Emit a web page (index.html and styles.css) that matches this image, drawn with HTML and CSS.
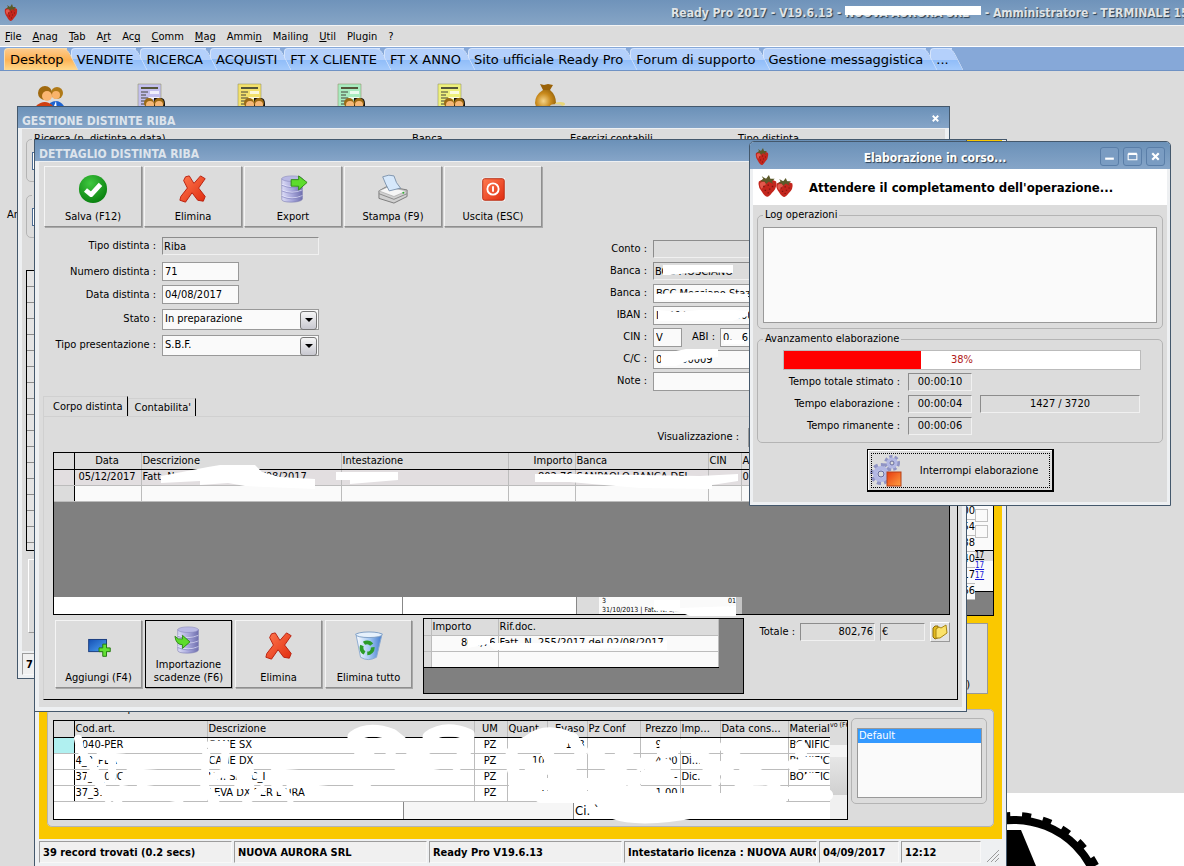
FILE: index.html
```html
<!DOCTYPE html>
<html lang="it">
<head>
  <meta charset="UTF-8">
  <meta name="viewport" content="width=device-width, initial-scale=1.0">
  <title>Ready Pro 2017</title>
  <link rel="stylesheet" href="styles.css">
</head>

<body>

<!-- Shared icons -->
<svg class="defs" aria-hidden="true">
  <defs>
    <linearGradient id="gDb" x1="0" x2="1"><stop offset="0" stop-color="#dcdcf6"/><stop offset=".5" stop-color="#a9a9dc"/><stop offset="1" stop-color="#6f6fae"/></linearGradient>
    <radialGradient id="gGreen" cx=".4" cy=".3" r=".8"><stop offset="0" stop-color="#3fc83f"/><stop offset="1" stop-color="#04780a"/></radialGradient>
    <linearGradient id="gRed" x1="0" x2="1" y1="0" y2="1"><stop offset="0" stop-color="#ff7a50"/><stop offset="1" stop-color="#e02d10"/></linearGradient>
    <linearGradient id="gOrange" x1="0" x2="1" y1="0" y2="1"><stop offset="0" stop-color="#e83a10"/><stop offset="1" stop-color="#ffa040"/></linearGradient>
    <linearGradient id="gBlue" x1="0" x2="1" y1="0" y2="1"><stop offset="0" stop-color="#1550b4"/><stop offset="1" stop-color="#4fa4f4"/></linearGradient>
    <linearGradient id="gBin" x1="0" x2="1"><stop offset="0" stop-color="#ffffff"/><stop offset=".5" stop-color="#a8cbf4"/><stop offset="1" stop-color="#3f78cc"/></linearGradient>
    <radialGradient id="gGold" cx=".4" cy=".5" r=".7"><stop offset="0" stop-color="#f4d48a"/><stop offset=".5" stop-color="#c98a1c"/><stop offset="1" stop-color="#8a5a08"/></radialGradient>
  </defs>
  <symbol id="berry" viewBox="0 0 16 18" preserveAspectRatio="none">
    <path d="M2 5 Q8 1 14 5 Q15 10 11 14 Q9 17 8 17 Q6 17 4 13 Q1 9 2 5Z" fill="#c3261d"/>
    <path d="M3 6 Q6 4 7 7 Q5 9 4 11 Q2 8 3 6Z" fill="#e2584c"/>
    <path d="M3 5 L5 3 L4 1 L7 3 L9 0 L10 3 L13 3 L11 5 L12 7 L9 5 L7 7 L6 5Z" fill="#5b5a2a"/>
    <path d="M5 9h1M8 8h1M11 9h1M6 12h1M9 11h1M8 14h1" stroke="#7c1510"/>
  </symbol>
  <symbol id="cross" viewBox="0 0 32 32">
    <path d="M8 3 L12 2 L17 10 L24 2 L29 5 L22 15 L29 24 L27 29 L21 28 L15 20 L8 30 L2 28 L3 24 L10 15 L6 7Z" fill="url(#gRed)" stroke="#b81e0c" stroke-linejoin="round"/>
  </symbol>
  <symbol id="db" viewBox="0 0 32 32">
    <path d="M4 5 V27 Q4 30 14 30 T26 27 V5Z" fill="url(#gDb)" stroke="#7676ae" stroke-width=".6"/>
    <ellipse cx="15" cy="5" rx="11" ry="3" fill="#b9b9e4" stroke="#8585bb" stroke-width=".6"/>
    <path d="M4 11 Q15 16 26 11 M4 17 Q15 22 26 17 M4 23 Q15 28 26 23" fill="none" stroke="#ededff" stroke-width=".7"/>
    <path d="M4 12 Q15 17 26 12 M4 18 Q15 23 26 18 M4 24 Q15 29 26 24" fill="none" stroke="#8585bf" stroke-width=".7"/>
  </symbol>
  <symbol id="doc" viewBox="0 0 32 32">
    <path d="M4 1H27V30H4Z" fill="currentColor" stroke="#8a8a5a" stroke-opacity=".5"/>
    <path d="M7 4H24V6H7Z" fill="#55553a"/>
    <path d="M7 9h7M7 12h5M7 15h7M7 18h4M7 21h4" stroke="#44443a"/>
    <path d="M16 8H25V11H16ZM15 14H25V16H15Z" fill="#fff" fill-opacity=".75"/>
    <path d="M20 15 H27 Q31 15 31 21 V26 H20Z" fill="#111"/>
    <circle cx="15" cy="20" r="5" fill="#9a6a14"/><circle cx="25" cy="20" r="5" fill="#9a6a14"/>
    <circle cx="16" cy="22" r="4" fill="#f7b877"/><circle cx="25" cy="22" r="4" fill="#f7b877"/>
  </symbol>
</svg>

<header class="app-title">
  <svg class="berry"><use href="#berry"/></svg>
  <h1>Ready Pro 2017 - V19.6.13 - <span class="struck">NUOVA AURORA SRL</span> - Amministratore - TERMINALE 15</h1>
</header>

<nav class="menubar">
  <a href="#"><u>F</u>ile</a>
  <a href="#"><u>A</u>nag</a>
  <a href="#"><u>T</u>ab</a>
  <a href="#">A<u>r</u>t</a>
  <a href="#">Ac<u>q</u></a>
  <a href="#"><u>C</u>omm</a>
  <a href="#"><u>M</u>ag</a>
  <a href="#">Ammi<u>n</u></a>
  <a href="#">Mailin<u>g</u></a>
  <a href="#"><u>U</u>til</a>
  <a href="#">Plugin</a>
  <a href="#">?</a>
</nav>

<nav class="tabbar">
  <button class="tab active"><span>Desktop</span></button>
  <button class="tab"><span>VENDITE</span></button>
  <button class="tab"><span>RICERCA</span></button>
  <button class="tab"><span>ACQUISTI</span></button>
  <button class="tab"><span>FT X CLIENTE</span></button>
  <button class="tab"><span>FT X ANNO</span></button>
  <button class="tab"><span>Sito ufficiale Ready Pro</span></button>
  <button class="tab"><span>Forum di supporto</span></button>
  <button class="tab"><span>Gestione messaggistica</span></button>
  <button class="tab"><span>...</span></button>
</nav>

<main class="desktop">

  <div class="shortcuts">
    <svg viewBox="0 0 32 32">
      <circle cx="23" cy="10" r="6" fill="#b07a18"/><circle cx="22" cy="12" r="4" fill="#f9b36a"/>
      <path d="M16 30V20q8-5 14 3v7z" fill="#1d63cf"/><path d="M22 18l-2 5 3 4z" fill="#fff"/>
      <circle cx="11" cy="10" r="7" fill="#a0690f"/><circle cx="13" cy="13" r="5" fill="#fbb670"/>
      <path d="M2 30V23q9-8 17 0v7z" fill="#cf3f10"/>
    </svg>
    <svg class="violet"><use href="#doc"/></svg>
    <svg class="yellow"><use href="#doc"/></svg>
    <svg class="green"><use href="#doc"/></svg>
    <svg class="lime"><use href="#doc"/></svg>
    <svg viewBox="0 0 32 32">
      <path d="M6 1 L10 2 L14 1 L19 2 L16 7 H9Z" fill="#9a6208"/>
      <path d="M9 7 Q1 12 1 20 Q2 29 12 29 Q22 28 22 20 Q22 12 16 7Z" fill="url(#gGold)"/>
      <ellipse cx="26" cy="21" rx="5" ry="2" fill="#e8d678"/><ellipse cx="22" cy="23" rx="6" ry="2" fill="#c8c8c8"/>
    </svg>
  </div>
  <span class="stray-label">Anno</span>

  <!-- Gear picture in the corner of the wallpaper -->
  <svg class="wallpaper" viewBox="1007 793 177 73" preserveAspectRatio="xMinYMin slice">
    <rect x="1007" y="793" width="177" height="73" fill="#fff"/>
    <circle cx="1014" cy="907" r="87" fill="none" stroke="#000" stroke-width="8"/>
    <circle cx="1014" cy="907" r="92" fill="none" stroke="#000" stroke-width="6" stroke-dasharray="9 12"/>
    <path d="M1007 830H1021L1036 866H1007Z"/>
  </svg>

  <!-- Gestione distinte -->
  <section class="window win-list">
    <div class="titlebar"><h2>GESTIONE DISTINTE RIBA</h2><button class="win-btn small" aria-label="Chiudi"><svg viewBox="0 0 12 12"><path d="M3 3L9 9M9 3L3 9"/></svg></button></div>
    <div class="list-body">
      <div class="search-row">
        <fieldset><legend>Ricerca (n. distinta o data)</legend><input aria-label="Ricerca"></fieldset>
        <span>Banca</span><span>Esercizi contabili</span><span>Tipo distinta</span>
      </div>
      <fieldset class="second"><legend>Filtri</legend><input aria-label="Filtri"></fieldset>
      <div class="list-rows"></div>
      <div class="list-btn"></div>
    </div>
    <div class="status"><div>7</div></div>
  </section>

  <!-- Documento -->
  <section class="window win-doc">
    <div class="doc-body">
      <div class="doc-upper">
        <div class="doc-strip">
          <div class="numbers"><span>00</span><span>54</span><span>38</span><span>40</span><span>17</span><span>66</span></div>
          <div class="side"><i></i><i></i><b>17</b><a href="#">17</a><a href="#">17</a></div>
        </div>
        <div class="doc-btn">)</div>
      </div>
      <fieldset class="doc-rows">
        <legend>Visualizza corpo documento</legend>
        <div class="grid-box">
          <table class="grid items">
            <colgroup><col class="w20"><col class="w133"><col class="w267"><col class="w33"><col class="w40"><col class="w40"><col class="w53"><col class="w40"><col class="w40"><col class="w68"><col></colgroup>
            <thead><tr><th></th><th>Cod.art.</th><th>Descrizione</th><th class="c">UM</th><th>Quant</th><th class="r">Evaso</th><th>Pz Conf</th><th class="r">Prezzo</th><th>Imp...</th><th>Data cons...</th><th>Materiale</th></tr></thead>
            <tbody>
              <tr><td class="current"></td><td>4040-PER</td><td>CANE SX</td><td class="c">PZ</td><td class="r">101</td><td class="r">118</td><td></td><td class="r">9,00</td><td>Dic.</td><td></td><td>BONIFICO</td></tr>
              <tr><td></td><td>4_3_PER</td><td>CANE DX</td><td class="c">PZ</td><td class="r">10</td><td></td><td></td><td class="r">4,00</td><td>Di...</td><td></td><td>BONIFICO</td></tr>
              <tr><td></td><td>37_3_00C</td><td>VIT. SA_ C_I</td><td class="c">PZ</td><td></td><td></td><td></td><td class="r">-</td><td>Dic.</td><td></td><td>BONIFICO</td></tr>
              <tr><td></td><td>37_31.</td><td>LEVA DX PER L'URA</td><td class="c">PZ</td><td class="r">2</td><td></td><td></td><td class="r">1,00</td><td>L...</td><td></td><td></td></tr>
            </tbody>
          </table>
          <div class="grid-foot"><span></span><span></span><span>Ci. &#96;</span></div>
          <div class="ghost"><small>vo (F6)</small></div>
        </div>
        <fieldset class="default-box">
          <select size="4" aria-label="Vista"><option selected>Default</option></select>
        </fieldset>
      </fieldset>
    </div>
    <footer class="status">
      <div>39 record trovati (0.2 secs)</div>
      <div>NUOVA AURORA SRL</div>
      <div>Ready Pro V19.6.13</div>
      <div>Intestatario licenza : NUOVA AURORA</div>
      <div class="short">04/09/2017</div>
      <div class="short">12:12</div>
      <svg class="grip" viewBox="0 0 14 14"><path d="M1 13L13 1M5 13L13 5M9 13L13 9"/></svg>
    </footer>
    <!-- painted-over data -->
    <svg class="redact" viewBox="34 139 973 727" preserveAspectRatio="xMinYMin slice">
      <g class="stroke">
        <path d="M78 738L80 748L86 757L94 768L104 790"/><path d="M100 755L124 757M112 762V776"/>
        <path d="M90 774L100 784L108 798M124 776L136 766"/>
        <path d="M132 766L190 762M140 782L186 776M108 790L118 800M122 788L180 798"/>
        <path d="M206 752L204 784L212 800"/><path d="M210 744H226L224 762L226 770"/>
        <path d="M212 777L226 770L250 771M240 777H248M212 794L216 798M238 784H250M246 800L262 788"/>
        <path d="M274 766L330 762M290 784L330 780M270 778L290 798"/>
      </g>
      <g class="stroke wide">
        <path d="M353 736Q368 725 392 734L412 750L430 760"/><path d="M354 736L360 752L368 752"/>
        <path d="M428 736Q445 724 468 734L466 748L456 764"/><path d="M390 756L404 770L446 776M352 776L372 794"/>
        <path d="M528 740Q545 726 572 738L580 752"/>
        <path d="M511 752L512 768L516 778M524 742H560M514 783H620M530 768H570M546 752L552 762"/>
        <path d="M592 750L610 766L630 778L636 790M620 752L640 764M540 796H610M606 798H780"/>
        <path d="M612 812Q640 822 700 810"/><path d="M664 744H696L704 760L714 780M662 752L672 750"/>
        <path d="M640 777H664M696 752L730 774L750 790L826 794M646 793H652"/><path d="M724 746L746 768L774 782"/>
        <path d="M666 764L650 768M800 746V752M792 764H794M804 762L816 762M808 778H814"/>
      </g>
    </svg>
  </section>

  <!-- Dettaglio distinta -->
  <section class="window win-detail">
    <div class="titlebar"><h2>DETTAGLIO DISTINTA RIBA</h2></div>
    <div class="detail-body">
      <div class="toolbar">
        <button class="tool">
          <svg viewBox="0 0 32 32"><circle cx="16" cy="16" r="15" fill="url(#gGreen)"/><path d="M8 17L14 22L24 11" fill="none" stroke="#fff" stroke-width="5" stroke-linejoin="round"/></svg>
          Salva (F12)
        </button>
        <button class="tool"><svg><use href="#cross"/></svg>Elimina</button>
        <button class="tool">
          <svg viewBox="0 0 32 32"><use href="#db"/><path d="M14 6H22V2L31 9L22 17V13H14Z" fill="#5ddc2c" stroke="#2f8a14"/></svg>
          Export
        </button>
        <button class="tool">
          <svg viewBox="0 0 32 32">
            <path d="M1 18L10 13L31 17V24L17 31L1 26Z" fill="#d0d0d0" stroke="#777"/>
            <path d="M1 18L10 14L31 18L17 24Z" fill="#f6f6f6" stroke="#999" stroke-width=".6"/>
            <path d="M5 3Q12 0 17 2Q19 10 24 15L12 18Q8 11 5 3Z" fill="#d6e8fb" stroke="#7d93ad"/>
            <path d="M1 21L17 27L31 21" fill="none" stroke="#888"/><circle cx="27" cy="20" r="1" fill="#2fae2f"/>
          </svg>
          Stampa (F9)
        </button>
        <button class="tool">
          <svg viewBox="0 0 32 32"><rect x="4" y="4" width="25" height="25" rx="2" fill="#fff"/><rect x="5" y="5" width="23" height="23" rx="2" fill="url(#gRed)" stroke="#b32a10"/><circle cx="16" cy="16" r="6" fill="none" stroke="#fff" stroke-width="2"/><path d="M16 13V19" stroke="#fff" stroke-width="2"/></svg>
          Uscita (ESC)
        </button>
      </div>

      <div class="forms">
        <form class="form-left">
          <label for="tipo">Tipo distinta :</label><input id="tipo" class="flat" value="Riba" readonly>
          <label for="numero">Numero distinta :</label><input id="numero" class="short" value="71">
          <label for="data">Data distinta :</label><input id="data" class="short" value="04/08/2017">
          <label for="stato">Stato :</label><div class="combo"><select id="stato"><option>In preparazione</option></select></div>
          <label for="pres">Tipo presentazione :</label><div class="combo"><select id="pres"><option>S.B.F.</option></select></div>
        </form>
        <form class="form-right">
          <label for="conto">Conto :</label><input id="conto" class="flat" readonly>
          <label for="banca1">Banca :</label><input id="banca1" class="flat" value="BCC MOSCIANO" readonly>
          <label for="banca2">Banca :</label><input id="banca2" value="BCC Mosciano Stazione">
          <label for="iban">IBAN :</label><input id="iban" value="IT 40 V0847 0 0000009">
          <label for="cin">CIN :</label>
          <div class="pair"><input id="cin" value="V"><label for="abi">ABI :</label><input id="abi" value="0,   6"></div>
          <label for="cc">C/C :</label><input id="cc" value="000000009">
          <label for="note">Note :</label><input id="note">
        </form>
      </div>

      <div class="page-tabs"><button class="active">Corpo distinta</button><button>Contabilita'</button></div>
      <div class="page">
        <div class="view-row"><label for="vis">Visualizzazione :</label><input id="vis"></div>
        <div class="dark-box">
          <table class="grid">
            <colgroup><col class="w20"><col class="w67"><col class="w200"><col class="w167"><col class="w67"><col class="w133"><col class="w33"><col></colgroup>
            <thead><tr><th></th><th class="c">Data</th><th>Descrizione</th><th>Intestazione</th><th class="r">Importo</th><th>Banca</th><th>CIN</th><th>ABI</th></tr></thead>
            <tbody>
              <tr class="sel"><td></td><td class="c">05/12/2017</td><td>Fatt. N. 255/2017 del 02/08/2017</td><td>C</td><td class="r">802,76</td><td>SANPAOLO BANCA DEL</td><td></td><td>0</td></tr>
              <tr><td></td><td></td><td></td><td></td><td></td><td></td><td></td><td></td></tr>
            </tbody>
          </table>
          <div class="dark-foot">
            <span></span><span></span>
            <div class="mini"><p>3 <em>01</em></p><p>31/10/2013 | Fatt. N. 8/... <em>01</em></p></div>
          </div>
        </div>
        <div class="bottom-row">
          <button class="tool">
            <svg viewBox="0 0 32 32"><rect x="5" y="9" width="19" height="13" fill="url(#gBlue)" stroke="#16397c"/><path d="M20 14H24V18H28V22H24V27H20V22H16V18H20Z" fill="#62e034" stroke="#23780f"/></svg>
            Aggiungi (F4)
          </button>
          <button class="tool focused">
            <svg viewBox="0 0 32 32"><use href="#db"/><path d="M1 12Q4 16 9 15V11L17 18L9 25V21Q2 21 1 12Z" fill="#5ddc2c" stroke="#2f8a14"/></svg>
            Importazione<br>scadenze (F6)
          </button>
          <button class="tool"><svg><use href="#cross"/></svg>Elimina</button>
          <button class="tool">
            <svg viewBox="0 0 32 32"><path d="M2 3L7 28Q15 33 24 28L30 3Z" fill="url(#gBin)" stroke="#8aa9cf"/><ellipse cx="16" cy="4" rx="14" ry="3" fill="#e6f1fc" stroke="#7f9fc4"/><circle cx="14" cy="18" r="6" fill="none" stroke="#2a9c28" stroke-width="4" stroke-dasharray="9 3"/></svg>
            Elimina tutto
          </button>
          <div class="sub-box">
            <table class="grid">
              <colgroup><col class="w7"><col class="w67"><col></colgroup>
              <thead><tr><th></th><th>Importo</th><th>Rif.doc.</th></tr></thead>
              <tbody>
                <tr><td></td><td class="r">802,76</td><td>Fatt. N. 255/2017 del 02/08/2017</td></tr>
                <tr><td></td><td></td><td></td></tr>
              </tbody>
            </table>
          </div>
          <div class="total">
            <label for="tot">Totale :</label>
            <input id="tot" class="flat r" value="802,76" readonly>
            <input class="flat cur" value="€" aria-label="Valuta" readonly>
            <button aria-label="Apri"><svg viewBox="0 0 18 18"><path d="M2 5L4 3H7V5H9V14L4 16L2 14Z" fill="#e2b91e" stroke="#8a6c08"/><path d="M5 6L8 4L10 5L15 2L16 10L9 15L5 15Z" fill="#fbe26a" stroke="#a98612"/></svg></button>
          </div>
        </div>
      </div>
    </div>
    <!-- painted-over data -->
    <svg class="redact" viewBox="34 139 933 573">
      <path d="M663 265H733V273L700 272L670 275H663Z"/>
      <path d="M655 294L700 292L748 294V300H655V294Z"/>
      <path d="M658 310L678 312L700 310H735L748 311V316L732 321H658Z"/>
      <path d="M724 340H744V344H724Z"/>
      <path d="M661 354L686 349H718V357L690 360L676 366H661Z"/>
      <path d="M161 476L208 467L220 465H255L262 472L280 477L315 479V489L245 486L228 483L200 485V481L161 483Z"/>
      <path d="M336 472H398V480L350 484V480H336Z"/>
      <path d="M535 474H580L700 476L738 474V481L712 485V489L640 488L592 484L570 482H535Z"/>
      <path d="M468 636H490V643L500 643L660 643L667 640V650L620 648L555 650H495L488 644L468 648Z"/>
      <path d="M654 600H680V608L736 606V616H690L680 612L654 610Z"/>
    </svg>
  </section>

  <!-- Elaborazione in corso -->
  <section class="window win-dialog" role="dialog" aria-labelledby="dlg-title">
    <div class="titlebar">
      <svg class="berry"><use href="#berry"/></svg>
      <h2 id="dlg-title">Elaborazione in corso...</h2>
      <button class="win-btn" aria-label="Riduci"><svg viewBox="0 0 12 12"><path d="M2 8H10"/></svg></button>
      <button class="win-btn" aria-label="Ingrandisci"><svg viewBox="0 0 12 12"><path class="thin" d="M2 4H10V9H2Z M2 3H10"/></svg></button>
      <button class="win-btn" aria-label="Chiudi"><svg viewBox="0 0 12 12"><path d="M3 3L9 9M9 3L3 9"/></svg></button>
    </div>
    <div class="dialog-body">
      <div class="banner">
        <svg viewBox="0 0 38 24"><use href="#berry" x="-1" y="0" width="23" height="23"/><use href="#berry" x="17" y="3" width="21" height="20"/></svg>
        <strong>Attendere il completamento dell'operazione...</strong>
      </div>
      <fieldset class="log"><legend>Log operazioni</legend><textarea aria-label="Log operazioni" readonly></textarea></fieldset>
      <fieldset class="progress">
        <legend>Avanzamento elaborazione</legend>
        <div class="bar"><div class="fill" style="width: 38.4%"></div><span>38%</span></div>
        <div class="times">
          <span>Tempo totale stimato :</span><output>00:00:10</output>
          <span>Tempo elaborazione :</span><output>00:00:04</output><output class="count">1427 / 3720</output>
          <span>Tempo rimanente :</span><output>00:00:06</output>
        </div>
      </fieldset>
      <button class="stop">
        <svg viewBox="0 0 32 32">
          <circle cx="11" cy="19" r="9" fill="none" stroke="#9094c4" stroke-width="4" stroke-dasharray="4 3"/>
          <circle cx="11" cy="19" r="6" fill="#c4c8ec" stroke="#b3b8e4" stroke-width="4"/><circle cx="11" cy="19" r="3" fill="#dcdcdc" stroke="#666a9c"/>
          <circle cx="22" cy="8" r="6" fill="none" stroke="#9094c4" stroke-width="4" stroke-dasharray="3 2"/>
          <circle cx="22" cy="8" r="4" fill="#c4c8ec" stroke="#b3b8e4" stroke-width="3"/><circle cx="22" cy="8" r="2" fill="#dcdcdc" stroke="#666a9c"/>
          <rect x="17" y="17" width="14" height="14" fill="url(#gOrange)" stroke="#b5411a"/>
        </svg>
        <span>Interrompi elaborazione</span>
      </button>
    </div>
  </section>
</main>

</body>
</html>
```
FILE: styles.css
```css
* {
  box-sizing: border-box;
}

body {
  margin: 0;
  height: 100vh;
  display: flex;
  flex-direction: column;
  overflow: hidden;
  background: #dcdcdc;
  color: #000;
  font: 11px/14px "DejaVu Sans Condensed", "DejaVu Sans", sans-serif;
}

h1, h2, p {
  margin: 0;
}

button, input, select, textarea {
  font: inherit;
  color: inherit;
  border-radius: 0;
}

svg {
  display: block;
  flex: none;
}

.defs {
  position: absolute;
  width: 0;
  height: 0;
}

.berry {
  width: 16px;
  height: 18px;
}

/* App title, menu and tabs */
.app-title {
  flex: none;
  display: flex;
  align-items: center;
  height: 25px;
  padding: 0 3px;
  overflow: hidden;
  background: linear-gradient(#6f93ba, #86a5c6);
}

.app-title h1 {
  margin-left: 652px;
  font-size: 12px;
  white-space: nowrap;
  color: #dfe3e6;
  text-shadow: 1px 1px 1px #2c3e50;
}

.struck {
  position: relative;
  padding-right: 12px;
}

.struck::after {
  content: "";
  position: absolute;
  left: 0;
  right: 0;
  top: 0;
  height: 9px;
  background: #fff;
}

.menubar {
  flex: none;
  display: flex;
  gap: 11px;
  height: 22px;
  padding: 4px 5px;
  border-top: 1px solid #f4f4f4;
  border-bottom: 1px solid #fff;
}

.menubar a {
  color: #000;
  text-decoration: none;
}

.tabbar {
  flex: none;
  position: relative;
  z-index: 0;
  display: flex;
  align-items: flex-end;
  height: 24px;
  padding-left: 4px;
  background: #86a8d8;
  border-bottom: 1px solid #6f92c4;
}

.tab {
  position: relative;
  height: 22px;
  padding: 0 7px 0 6px;
  border: 0;
  background: none;
  font: 13px/21px "DejaVu Sans", sans-serif;
  white-space: nowrap;
}

.tab::before, .tab::after {
  content: "";
  position: absolute;
  top: 0;
  bottom: 0;
  background: linear-gradient(#b4d0fb 50%, #8fbcf8 50%, #a4cafc);
  border-top: 1px solid #d5e4fb;
}

.tab::before {
  left: 0;
  right: 4px;
  border-left: 1px solid #d5e4fb;
  border-radius: 4px 0 0 0;
}

.tab::after {
  z-index: 1;
  right: -2px;
  width: 14px;
  border-right: 1px solid #d5e4fb;
  border-radius: 0 6px 0 0;
  transform: skewX(27deg);
}

.tab span {
  position: relative;
  z-index: 2;
}

.tab.active::before, .tab.active::after {
  background: linear-gradient(#fcca8c, #fdb254 50%, #ffd98c);
  border-color: #f7dcae;
}

/* Desktop */
.desktop {
  flex: 1;
  position: relative;
  overflow: hidden;
}

.shortcuts {
  display: flex;
  gap: 68px;
  padding: 12px 34px;
}

.shortcuts svg {
  width: 32px;
  height: 32px;
}

.violet { color: #c3c0ee; }
.yellow { color: #f3e16c; }
.green { color: #a8ebc0; }
.lime { color: #eef07c; }

.stray-label {
  position: absolute;
  left: 7px;
  top: 137px;
}

.wallpaper {
  position: absolute;
  left: 1007px;
  right: 0;
  bottom: 0;
  height: 73px;
}

/* Windows */
.window {
  position: absolute;
  display: flex;
  flex-direction: column;
  background: #eef0f2;
  border: 1px solid #44586c;
}

.win-list { left: 17px; top: 35px; width: 933px; height: 573px; }
.win-doc { left: 34px; top: 68px; width: 973px; bottom: 0; border-bottom: 0; }
.win-detail { left: 34px; top: 68px; width: 933px; height: 573px; }
.win-dialog { left: 749px; top: 70px; width: 422px; height: 365px; border-radius: 5px 5px 0 0; }

.titlebar {
  flex: none;
  display: flex;
  align-items: center;
  height: 22px;
  padding: 6px 4px 0;
  background: linear-gradient(#6b91b8, #86a5c8);
  border-bottom: 1px solid #eef0f2;
}

.titlebar h2 {
  flex: 1;
  font-size: 12px;
  color: #dde4ec;
}

.win-btn {
  width: 19px;
  height: 19px;
  padding: 2px;
  background: #7a9cc2;
  border: 1px solid #5a7ea8;
  border-radius: 3px;
}

.win-btn svg {
  width: 13px;
  height: 13px;
  fill: none;
  stroke: #fff;
  stroke-width: 2;
}

.win-btn .thin {
  stroke-width: 1;
}

.win-btn.small {
  width: 11px;
  height: 11px;
  padding: 0;
  margin: 0 4px 4px 0;
  border: 0;
}

.win-btn.small svg {
  width: 11px;
  height: 11px;
}

fieldset {
  min-width: 0;
  margin: 0;
  padding: 0;
  border: 1px solid #b4b4b4;
  border-radius: 5px;
}

legend {
  margin-left: 5px;
  padding: 0 2px;
}

/* Gestione distinte */
.list-body {
  flex: 1;
  margin: 0 4px;
  padding: 3px 4px;
  background: #dcdcdc;
}

.search-row {
  display: grid;
  grid-template-columns: 386px 158px 168px 1fr;
  height: 50px;
}

.search-row fieldset, .second {
  width: 360px;
  height: 50px;
}

.list-body input {
  width: 100px;
  height: 18px;
  margin: 6px 5px;
  border: 1px solid #4d6d94;
}

.second {
  margin-top: 6px;
}

.list-rows {
  height: 281px;
  margin: 32px 0 8px;
  border: 1px solid #000;
  background: repeating-linear-gradient(#e4e4e4 0 15px, #8c8c8c 15px 16px);
}

.list-btn {
  height: 74px;
  width: 90px;
  margin-left: 2px;
  border: 1px solid #9a9a9a;
  border-left-color: #fff;
  border-top-color: #fff;
}

.status {
  flex: none;
  display: flex;
  gap: 2px;
  height: 27px;
  padding: 2px 4px 3px;
  font-weight: bold;
  background: #eef0f2;
}

.status div {
  width: 195px;
  padding: 4px 3px;
  overflow: hidden;
  white-space: nowrap;
  background: #f0f0f0;
  border: 1px solid #f8f8f8;
  border-top-color: #9c9c9c;
  border-left-color: #9c9c9c;
}

.status .short {
  width: 80px;
}

.status div:not(.short) {
  width: 193px;
}

.grip {
  width: 14px;
  height: 14px;
  margin: auto 2px 0 auto;
  stroke: #9a9a9a;
}

/* Buttons with an icon above the label */
.tool {
  display: flex;
  flex-direction: column;
  align-items: center;
  justify-content: flex-end;
  padding: 0 0 3px;
  line-height: 13px;
  background: #dcdcdc;
  border: 1px solid #8f8f8f;
  border-top-color: #f4f4f4;
  border-left-color: #f4f4f4;
  box-shadow: 1px 1px 0 #a8a8a8;
}

.tool svg {
  width: 30px;
  height: 30px;
  margin: auto;
}

/* Detail window */
.detail-body {
  flex: 1;
  display: flex;
  flex-direction: column;
  margin: 0 4px 4px;
  padding: 4px 4px 7px;
  background: #dcdcdc;
}

.toolbar {
  display: flex;
  gap: 2px;
  padding-left: 1px;
}

.toolbar .tool {
  width: 98px;
  height: 61px;
}

.forms {
  display: flex;
  height: 169px;
  padding-top: 6px;
}

.forms form {
  display: grid;
  align-items: center;
  align-content: start;
  column-gap: 6px;
}

.forms label {
  text-align: right;
}

.form-left {
  grid-template-columns: 113px 157px;
  grid-template-rows: 26px 25px 21px 28px 24px;
}

.form-right {
  flex: 1;
  grid-template-columns: 80px 1fr;
  grid-auto-rows: 22px;
  margin-left: 248px;
  padding-top: 5px;
}

.forms input, .view-row input {
  width: 100%;
  height: 19px;
  padding: 0 2px;
  background: #fafafa;
  border: 1px solid #999;
}

.forms input.short {
  width: 77px;
}

input.flat, .forms input.flat {
  height: 18px;
  padding: 0 1px;
  background: #dcdcdc;
  border: 1px solid #f0f0f0;
  border-top-color: #8c8c8c;
  border-left-color: #8c8c8c;
}

.combo {
  position: relative;
}

.combo select {
  display: block;
  width: 157px;
  height: 21px;
  padding: 0 2px;
  appearance: none;
  background: #fafafa;
  border: 1px solid #999;
}

.combo::after {
  content: "";
  position: absolute;
  right: 2px;
  top: 2px;
  width: 15px;
  height: 17px;
  border: 1px solid #777;
  border-radius: 3px;
  background: linear-gradient(#f6f6f6, #c8c8d0);
}

.combo::before {
  content: "";
  position: absolute;
  z-index: 1;
  right: 6px;
  top: 9px;
  border: 4px solid transparent;
  border-top-color: #000;
  border-bottom: 0;
}

.pair {
  display: flex;
  align-items: center;
}

.forms .pair input {
  width: 29px;
}

.pair label {
  width: 33px;
  margin-right: 5px;
}

.forms .pair label + input {
  flex: 1;
}

.page-tabs {
  display: flex;
  align-items: flex-end;
  height: 20px;
}

.page-tabs button {
  height: 18px;
  padding: 0 4px 0 6px;
  background: #dcdcdc;
  border: 1px solid #d0d0d0;
  border-right: 1px solid #000;
  border-bottom: 0;
}

.page-tabs .active {
  height: 20px;
  padding: 0 4px 0 9px;
}

.page {
  flex: 1;
  padding: 9px 7px 0 9px;
  border: 1px solid #d0d0d0;
  border-right-color: #000;
  border-bottom-color: #000;
}

.view-row {
  display: flex;
  align-items: center;
  height: 26px;
  padding-bottom: 4px;
}

.view-row label {
  width: 686px;
  margin-right: 9px;
  text-align: right;
}

.view-row input {
  flex: 1;
}

.dark-box {
  display: flex;
  flex-direction: column;
  justify-content: space-between;
  height: 163px;
  background: #808080;
  border: 1px solid #000;
}

/* Data grids */
.grid {
  width: 100%;
  table-layout: fixed;
  border-collapse: collapse;
  background: #fafafa;
  border-bottom: 1px solid #000;
}

.grid th, .grid td {
  height: 16px;
  padding: 0 2px 0 1px;
  overflow: hidden;
  white-space: nowrap;
  font-weight: normal;
  line-height: 14px;
  text-align: left;
  border-right: 1px solid #bcbcbc;
  border-bottom: 1px solid #bcbcbc;
}

.grid th {
  background: #dcdcdc;
  border-bottom-color: #000;
}

.grid th:first-child, .grid td:first-child {
  background: #dcdcdc;
  border-right-color: #000;
}

.grid .c { text-align: center; }
.grid .r, input.r { text-align: right; }
.grid .sel td { background: #e2dee0; }

.w7 { width: 7px; }
.w20 { width: 20px; }
.w33 { width: 33px; }
.w40 { width: 40px; }
.w53 { width: 53px; }
.w67 { width: 67px; }
.w68 { width: 68px; }
.w133 { width: 133px; }
.w167 { width: 167px; }
.w200 { width: 200px; }
.w267 { width: 267px; }

.dark-foot {
  display: grid;
  grid-template-columns: 349px 174px 165px;
  height: 17px;
}

.dark-foot span {
  background: #fff;
  border-right: 1px solid #888;
}

.mini {
  padding-left: 3px;
  overflow: hidden;
  background: #fafafa;
  border-right: 6px solid #c4c4c4;
  border-left: 22px solid #dcdcdc;
  font-size: 7px;
  line-height: 9px;
}

.mini em {
  float: right;
  font-style: normal;
}

.bottom-row {
  display: flex;
  gap: 3px;
  padding: 5px 0 0 2px;
}

.bottom-row > .tool {
  width: 87px;
  height: 68px;
}

.tool.focused {
  border: 1px solid #000;
}

.sub-box {
  width: 321px;
  height: 76px;
  margin: -2px 0 0 8px;
  background: #808080;
  border: 1px solid #000;
}

.sub-box .grid {
  width: 295px;
  border-right: 1px solid #000;
}

.sub-box th {
  border-bottom-color: #bcbcbc;
}

.sub-box tr:last-child td {
  border-bottom-color: #000;
}

.sub-box .grid th:first-child, .sub-box .grid td:first-child {
  border-right-color: #bcbcbc;
}

.total {
  flex: 1;
  display: flex;
  align-items: center;
  justify-content: flex-end;
  gap: 5px;
  height: 23px;
}

.total #tot { width: 75px; }
.total .cur { width: 45px; }

.total button {
  width: 20px;
  height: 20px;
  padding: 0;
  background: #e4e4e4;
  border: 1px solid #999;
  border-top-color: #fff;
  border-left-color: #fff;
}

.total button svg {
  width: 18px;
  height: 18px;
}

/* Areas painted over in white */
.redact {
  position: absolute;
  left: -1px;
  top: -1px;
  width: calc(100% + 2px);
  height: calc(100% + 2px);
  pointer-events: none;
  fill: #fff;
}

.redact .stroke {
  fill: none;
  stroke: #fff;
  stroke-width: 8;
  stroke-linecap: round;
  stroke-linejoin: round;
}

.redact .wide {
  stroke-width: 12;
}

/* Document window */
.doc-body {
  flex: 1;
  display: flex;
  flex-direction: column;
  margin: 0 4px;
  padding: 0 8px 12px;
  background: #fac800;
}

.doc-upper {
  flex: 1;
  display: flex;
  flex-direction: column;
  align-items: flex-end;
  justify-content: flex-end;
  gap: 7px;
  padding-bottom: 8px;
}

.doc-strip {
  display: grid;
  grid-template-columns: 40px 18px;
  height: 112px;
  border: 1px solid #000;
  border-top: 0;
  background: #808080;
}

.numbers span {
  display: block;
  height: 16px;
  text-align: right;
  background: #fafafa;
  border-bottom: 1px solid #bbb;
}

.side {
  display: flex;
  flex-direction: column;
  height: 88px;
  font-size: 8px;
  line-height: 10px;
  background: #fafafa;
  border-bottom: 1px solid #000;
}

.side i {
  height: 13px;
  margin: 5px 5px 0 0;
  border: 1px solid #c0c0c0;
}

.side i + i {
  margin-top: 3px;
}

.side b {
  margin-top: 12px;
  font-weight: normal;
  text-decoration: underline;
  background: #dcdcdc;
  border-top: 1px solid #000;
}

.side a {
  color: #1818d8;
}

.doc-btn {
  width: 60px;
  height: 71px;
  margin-right: 6px;
  padding: 54px 17px 0;
  text-align: right;
  background: #dcdcdc;
  border: 1px solid #999;
}

.doc-rows {
  display: flex;
  align-items: flex-start;
  gap: 3px;
  height: 125px;
  padding: 4px 5px;
  background: #dcdcdc;
}

.grid-box {
  position: relative;
  width: 795px;
  height: 100px;
  overflow: hidden;
  background: #fff;
  border: 1px solid #000;
}

.items {
  background: #fff;
  border-bottom: 0;
}

.grid.items td:first-child {
  background: #fff;
}

.grid.items td.current {
  background: #b0f0f0;
}

.grid-foot {
  display: grid;
  grid-template-columns: 349px 170px 1fr;
  height: 17px;
  font-size: 13px;
  line-height: 17px;
}

.grid-foot span + span {
  padding-left: 1px;
  border-left: 1px solid #888;
}

.grid-foot span:nth-child(2) {
  background: #f6f6f6;
}

.ghost {
  position: absolute;
  right: 0;
  top: 0;
  bottom: 0;
  width: 17px;
  overflow: hidden;
  background: linear-gradient(#dcdcdc 24px, #f4f4f4 24px 36px, #e6e6e6 36px, #d0d0d0 74px, #f0f0f0 74px);
}

.ghost small {
  display: block;
  font-size: 7px;
  line-height: 8px;
  white-space: nowrap;
}

.default-box {
  width: 136px;
  height: 86px;
  margin-top: -2px;
  padding: 9px 4px 0 5px;
}

.default-box select {
  display: block;
  width: 100%;
  height: 70px;
  padding: 0;
  overflow: hidden;
  background: #fafafa;
  border: 1px solid #999;
}

.default-box option {
  min-height: 14px;
  padding: 0 1px;
  color: #fff;
  background: #3399ff linear-gradient(#3399ff, #3399ff);
}

/* Progress dialog */
.win-dialog .titlebar {
  gap: 4px;
  height: 27px;
  padding: 2px 5px 0 4px;
  border: 0;
  border-radius: 4px 4px 0 0;
}

.win-dialog h2 {
  padding-top: 3px;
  font-size: 12px;
  text-align: center;
  color: #fff;
  text-shadow: 1px 1px 1px #2c3e50;
}

.dialog-body {
  flex: 1;
  display: flex;
  flex-direction: column;
  margin: 0 3px 3px;
  background: #dcdcdc;
}

.banner {
  display: flex;
  align-items: center;
  gap: 14px;
  height: 36px;
  padding-left: 4px;
  font-size: 13px;
  background: #fff;
}

.banner strong {
  padding-top: 2px;
}

.banner svg {
  width: 38px;
  height: 24px;
}

.dialog-body fieldset {
  margin: 3px 4px 0;
}

.log {
  height: 121px;
}

.log textarea {
  display: block;
  width: calc(100% - 10px);
  height: 96px;
  margin: 5px;
  resize: none;
  background: #fafafa;
  border: 1px solid #999;
}

.progress {
  height: 111px;
}

.bar {
  position: relative;
  height: 20px;
  margin: 4px 21px 0 25px;
  text-align: center;
  line-height: 18px;
  color: #b01818;
  background: #fff;
  border: 1px solid #bbb;
}

.bar .fill {
  position: absolute;
  left: 0;
  top: 0;
  bottom: 0;
  background: #f00;
}

.times {
  display: grid;
  grid-template-columns: 117px 64px 1fr;
  grid-auto-rows: 22px;
  column-gap: 8px;
  align-items: center;
  margin: 1px 22px 0 25px;
}

.times span {
  grid-column: 1;
  text-align: right;
}

.times output {
  height: 18px;
  line-height: 15px;
  text-align: center;
  border: 1px solid #f0f0f0;
  border-top-color: #8c8c8c;
  border-left-color: #8c8c8c;
}

.stop {
  display: flex;
  align-items: center;
  align-self: center;
  width: 187px;
  height: 43px;
  margin-top: 6px;
  padding: 0 2px;
  background: #dcdcdc;
  border: 1px solid #000;
  box-shadow: inset -1px -1px 0 #000, inset 1px 1px 0 #fff;
  outline: 1px dotted #000;
  outline-offset: -5px;
}

.stop svg {
  width: 32px;
  height: 32px;
}

.stop span {
  flex: 1;
  padding-left: 6px;
}
```
